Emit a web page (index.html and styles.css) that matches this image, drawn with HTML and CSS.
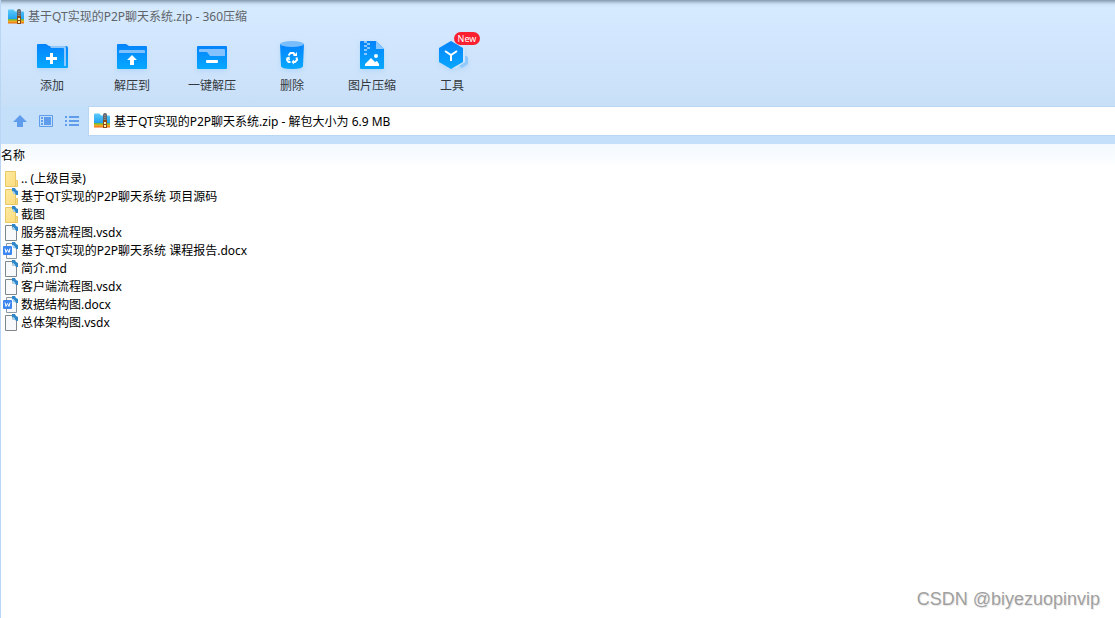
FILE: index.html
```html
<!DOCTYPE html>
<html lang="zh-CN">
<head>
<meta charset="utf-8">
<title>基于QT实现的P2P聊天系统.zip - 360压缩</title>
<link rel="stylesheet" href="styles.css">
</head>
<body>
<svg class="defs" aria-hidden="true">
  <defs>
    <linearGradient id="blue" x1="0" y1="0" x2="0" y2="1"><stop offset="0" stop-color="#0583fc"/><stop offset="1" stop-color="#06a8ff"/></linearGradient>
    <linearGradient id="sky" x1="0" y1="0" x2="0" y2="1"><stop offset="0" stop-color="#5ccbf9"/><stop offset="1" stop-color="#1a9df0"/></linearGradient>
    <linearGradient id="manila" x1="0" y1="0" x2="1" y2="1"><stop offset="0" stop-color="#ffeaa0"/><stop offset="1" stop-color="#fadb7c"/></linearGradient>
    <symbol id="archive" viewBox="0 0 16 16">
      <path fill="url(#sky)" d="M0 1.500Q0 .5 1 .5H5.500L7 2.500H15Q16 2.500 16 3.500V11H0Z"/>
      <path fill="#72bd3b" d="M0 10H16V12H0Z"/><path fill="#f5a623" d="M0 11.500H16V14H0Z"/><path fill="#e86a17" d="M0 13.500H16V14.500H0Z"/>
      <path fill="#5d6672" d="M9 2Q9 0 11 0T13 2V8H9Z"/><path stroke="#c9a878" stroke-dasharray="1 1" d="M11 2V8"/>
      <path fill="#8a4a14" d="M9 7H13V15H9Z"/><path fill="#fff1b0" d="M10 9H12V11H10ZM10 12H12V14H10Z"/>
    </symbol>
    <symbol id="folder" viewBox="0 0 16 18">
      <path fill="url(#manila)" stroke="#e8c767" d="M2.500 1.500H12.500V10.500H14.500V16.500H2.500Z"/><path fill="none" stroke="#e8c767" d="M12.500 16V10.500"/>
    </symbol>
    <symbol id="mark" viewBox="0 0 16 18">
      <path fill="#fff" d="M12 0H16V4Z"/><path fill="#2f86c9" d="M9 0H12L13 2L15 3V7H13L12 5L9 3Z"/><path fill="#9bd0f2" d="M10 3H11V4H12V6H10Z"/>
    </symbol>
    <symbol id="page" viewBox="0 0 16 18">
      <path fill="#f8f9fa" stroke="#7e878e" d="M2.500 1.500H9.500L13.500 5.500V16.500H2.500Z"/><path fill="none" stroke="#bec5ca" d="M9.500 2V5.500H13"/>
    </symbol>
    <symbol id="word" viewBox="0 0 16 18">
      <path fill="#f8f9fa" stroke="#8c98a4" d="M3.500 1.500H9.500L13.500 5.500V16.500H3.500Z"/>
      <rect y="4" width="9" height="9" rx="1" fill="#3b86f0"/><path fill="none" stroke="#fff" d="M2 6.500L3 10.500L4.500 7.500L6 10.500L7 6.500"/>
    </symbol>
  </defs>
</svg>
<div class="window">
  <header class="chrome">
    <div class="titlebar">
      <svg class="archive-icon" aria-hidden="true"><use href="#archive"/></svg>
      <h1 class="title">基于QT实现的P2P聊天系统.zip - 360压缩</h1>
    </div>
    <nav class="toolbar" aria-label="工具栏">
      <button class="tool" type="button">
        <svg class="tool-icon" viewBox="0 0 32 32" aria-hidden="true"><path fill="url(#blue)" d="M1 5Q1 4 2 4H10L13 6H30Q32 6 32 8V27Q32 28 31 28H2Q1 28 1 27Z"/><path fill="#91c7fb" d="M14 6H29Q30 6 30 8V26H28V9Q28 8 27 8H15Z"/><path stroke="#fff" stroke-width="3" d="M10 18.500H21M15.500 13V24"/></svg>
        <span>添加</span>
      </button>
      <button class="tool" type="button">
        <svg class="tool-icon" viewBox="0 0 32 32" aria-hidden="true"><path fill="url(#blue)" d="M1 5Q1 4 2 4H10L13 6H30Q31 6 31 7V28Q31 29 30 29H2Q1 29 1 28Z"/><path fill="#7fc1ff" d="M3 11Q3 10 4 10H28Q29 10 29 11V13H3Z"/><path fill="#fff" d="M16 15L21 20H18V25H14V20H11Z"/></svg>
        <span>解压到</span>
      </button>
      <button class="tool" type="button">
        <svg class="tool-icon" viewBox="0 0 32 32" aria-hidden="true"><rect x="1" y="6" width="30" height="23" rx="1" fill="url(#blue)"/><path fill="#83c2ff" d="M3 10Q3 9 4 9H28Q29 9 29 10V16H14L11 12H3Z"/><rect x="10" y="20" width="12" height="3" rx="1" fill="#fff"/></svg>
        <span>一键解压</span>
      </button>
      <button class="tool" type="button">
        <svg class="tool-icon" viewBox="0 0 32 32" aria-hidden="true"><path fill="url(#blue)" d="M4 4H28L27 26Q27 29 16 29T5 26Z"/><ellipse cx="16" cy="4" rx="12" ry="3" fill="#79bdfc"/><g fill="none" stroke="#fff" stroke-width="2"><path d="M12.500 15.500L14.500 13H17.500L19 15.500"/><path d="M20.500 17.500L21 20L19 22H17"/><path d="M14.500 22H12.500L11 20L12 18"/></g><path fill="#fff" d="M17 16H21V12ZM18 19.500V24.500L15.500 22ZM9.500 18L13.500 16.500L14 20.500Z"/></svg>
        <span>删除</span>
      </button>
      <button class="tool" type="button">
        <svg class="tool-icon" viewBox="0 0 32 32" aria-hidden="true"><path fill="url(#blue)" d="M4 2Q4 1 5 1H20L28 9V28Q28 29 27 29H5Q4 29 4 28Z"/><path fill="#8bc7ff" d="M20 1L28 9H20ZM8 1H11V3H8ZM11 3H14V5H11ZM8 5H11V7H8ZM11 7H14V9H11ZM8 9H11V11H8ZM8 13H11V15H8Z"/><circle cx="20" cy="16" r="2" fill="#fff"/><path fill="#fff" d="M9 26V24L15 18L19 22L21 21L23 24V26Z"/></svg>
        <span>图片压缩</span>
      </button>
      <button class="tool" type="button">
        <svg class="tool-icon" viewBox="0 0 32 32" aria-hidden="true"><path fill="#92c9fc" d="M26 14L32 17V24L26 28L20 24V17Z"/><path fill="#d0e6fd" d="M16 0L29 7V22L20 28H15Z"/><path fill="url(#blue)" d="M15 1L27 8V22L15 29L3 22V8Z"/><path fill="none" stroke="#fff" stroke-width="2" d="M9 11L15 15L21 11M15 15V21"/></svg>
        <span class="badge">New</span>
        <span>工具</span>
      </button>
    </nav>
    <div class="locationbar">
      <button class="nav-button" type="button" aria-label="上级目录"><svg viewBox="0 0 16 16"><path fill="#609cec" d="M8 2L15 9H11V14H5V9H1Z"/></svg></button>
      <button class="nav-button" type="button" aria-label="预览"><svg viewBox="0 0 16 16"><path fill="none" stroke="#609cec" d="M1.500 2.500H14.500V13.500H1.500Z"/><path fill="#609cec" d="M3 4H5V6H3ZM3 7H5V9H3ZM3 10H5V12H3ZM6 4H13V12H6Z"/></svg></button>
      <button class="nav-button" type="button" aria-label="列表"><svg viewBox="0 0 16 16"><path fill="#609cec" d="M1 3H3V5H1ZM1 7H3V9H1ZM1 11H3V13H1ZM5 3H15V5H5ZM5 7H15V9H5ZM5 11H15V13H5Z"/></svg></button>
      <label class="address">
        <svg class="archive-icon" aria-hidden="true"><use href="#archive"/></svg>
        <input class="address-input" type="text" aria-label="地址" value="基于QT实现的P2P聊天系统.zip - 解包大小为 6.9 MB">
      </label>
    </div>
  </header>
  <main class="content">
    <table class="files">
      <thead><tr><th scope="col">名称</th></tr></thead>
      <tbody>
        <tr><td><div class="file"><svg aria-hidden="true"><use href="#folder"/></svg>.. (上级目录)</div></td></tr>
        <tr><td><div class="file"><svg aria-hidden="true"><use href="#folder"/><use href="#mark"/></svg>基于QT实现的P2P聊天系统 项目源码</div></td></tr>
        <tr><td><div class="file"><svg aria-hidden="true"><use href="#folder"/><use href="#mark"/></svg>截图</div></td></tr>
        <tr><td><div class="file"><svg aria-hidden="true"><use href="#page"/><use href="#mark"/></svg>服务器流程图.vsdx</div></td></tr>
        <tr><td><div class="file"><svg aria-hidden="true"><use href="#word"/><use href="#mark"/></svg>基于QT实现的P2P聊天系统 课程报告.docx</div></td></tr>
        <tr><td><div class="file"><svg aria-hidden="true"><use href="#page"/><use href="#mark"/></svg>简介.md</div></td></tr>
        <tr><td><div class="file"><svg aria-hidden="true"><use href="#page"/><use href="#mark"/></svg>客户端流程图.vsdx</div></td></tr>
        <tr><td><div class="file"><svg aria-hidden="true"><use href="#word"/><use href="#mark"/></svg>数据结构图.docx</div></td></tr>
        <tr><td><div class="file"><svg aria-hidden="true"><use href="#page"/><use href="#mark"/></svg>总体架构图.vsdx</div></td></tr>
      </tbody>
    </table>
  </main>
  <div class="watermark">CSDN @biyezuopinvip</div>
</div>
</body>
</html>
```

FILE: styles.css
```css
* { box-sizing: border-box; }

body {
  margin: 0;
  color: #000;
  background: #fff;
  font: 12px/18px "Noto Sans", "Noto Sans CJK SC", sans-serif;
}

button, input { font: inherit; color: inherit; }
svg { display: block; flex: none; }
.defs { position: absolute; width: 0; height: 0; }

.window {
  position: relative;
  display: flex;
  flex-direction: column;
  min-height: 100vh;
  border-left: 1px solid #b9d6f5;
}

.chrome {
  padding-bottom: 8px;
  background:
    linear-gradient(#8797aa, #a9bfd4 2px, #c9def2 4px, transparent 7px),
    linear-gradient(#d6ebff, #d3e8fe 30px, #cde3fb 75px, #c7dff7 106px, #c4dff9 107px);
}

.titlebar {
  display: flex;
  align-items: center;
  gap: 4px;
  height: 34px;
  padding-left: 7px;
}

.archive-icon { width: 16px; height: 16px; }

.title {
  margin: 0;
  color: #606468;
  font-size: 12px;
  font-weight: 400;
}

.toolbar { display: flex; padding-left: 11px; }

.tool {
  position: relative;
  display: flex;
  flex-direction: column;
  align-items: center;
  gap: 5px;
  width: 80px;
  height: 72px;
  padding: 6px 0 0;
  border: 0;
  background: none;
  color: #35393d;
}

.tool-icon {
  width: 32px;
  height: 32px;
  overflow: visible;
  filter: drop-shadow(0 2px 2px #9ccbf880);
}

.badge {
  position: absolute;
  top: -2px;
  left: 42px;
  width: 26px;
  border-radius: 7px;
  background: #fa2030;
  color: #fff;
  font-size: 9px;
  line-height: 13px;
  text-align: center;
}

.locationbar {
  display: flex;
  align-items: center;
  padding-left: 6px;
}

.nav-button {
  display: grid;
  place-items: center;
  width: 26px;
  height: 26px;
  padding: 0;
  border: 0;
  background: none;
}

.nav-button svg { width: 16px; height: 16px; }

.address {
  display: flex;
  flex: 1;
  align-items: center;
  gap: 4px;
  height: 30px;
  margin-left: 3px;
  padding-left: 5px;
  border: 1px solid #b9d6f3;
  border-right: 0;
  background: #fff;
}

.address-input {
  flex: 1;
  min-width: 0;
  padding: 1px 0 0;
  border: 0;
  outline: 0;
  background: none;
}

.content {
  flex: 1;
  background: linear-gradient(#f2f8fe, #f8fcff 12px, #fff 24px);
}

.files { width: 100%; border-collapse: collapse; }
.files th { height: 26px; padding: 0 0 3px; font-weight: 400; text-align: left; }
.files td { padding: 0 0 0 2px; }
.file { display: flex; gap: 2px; white-space: pre; }
.file svg { width: 16px; height: 18px; }

.watermark {
  position: absolute;
  right: 15px;
  bottom: 7px;
  color: #a0a0a0;
  font: 18px/24px "Liberation Sans", sans-serif;
  text-shadow: 1px 1px 1px #e4e4e4;
}
```
